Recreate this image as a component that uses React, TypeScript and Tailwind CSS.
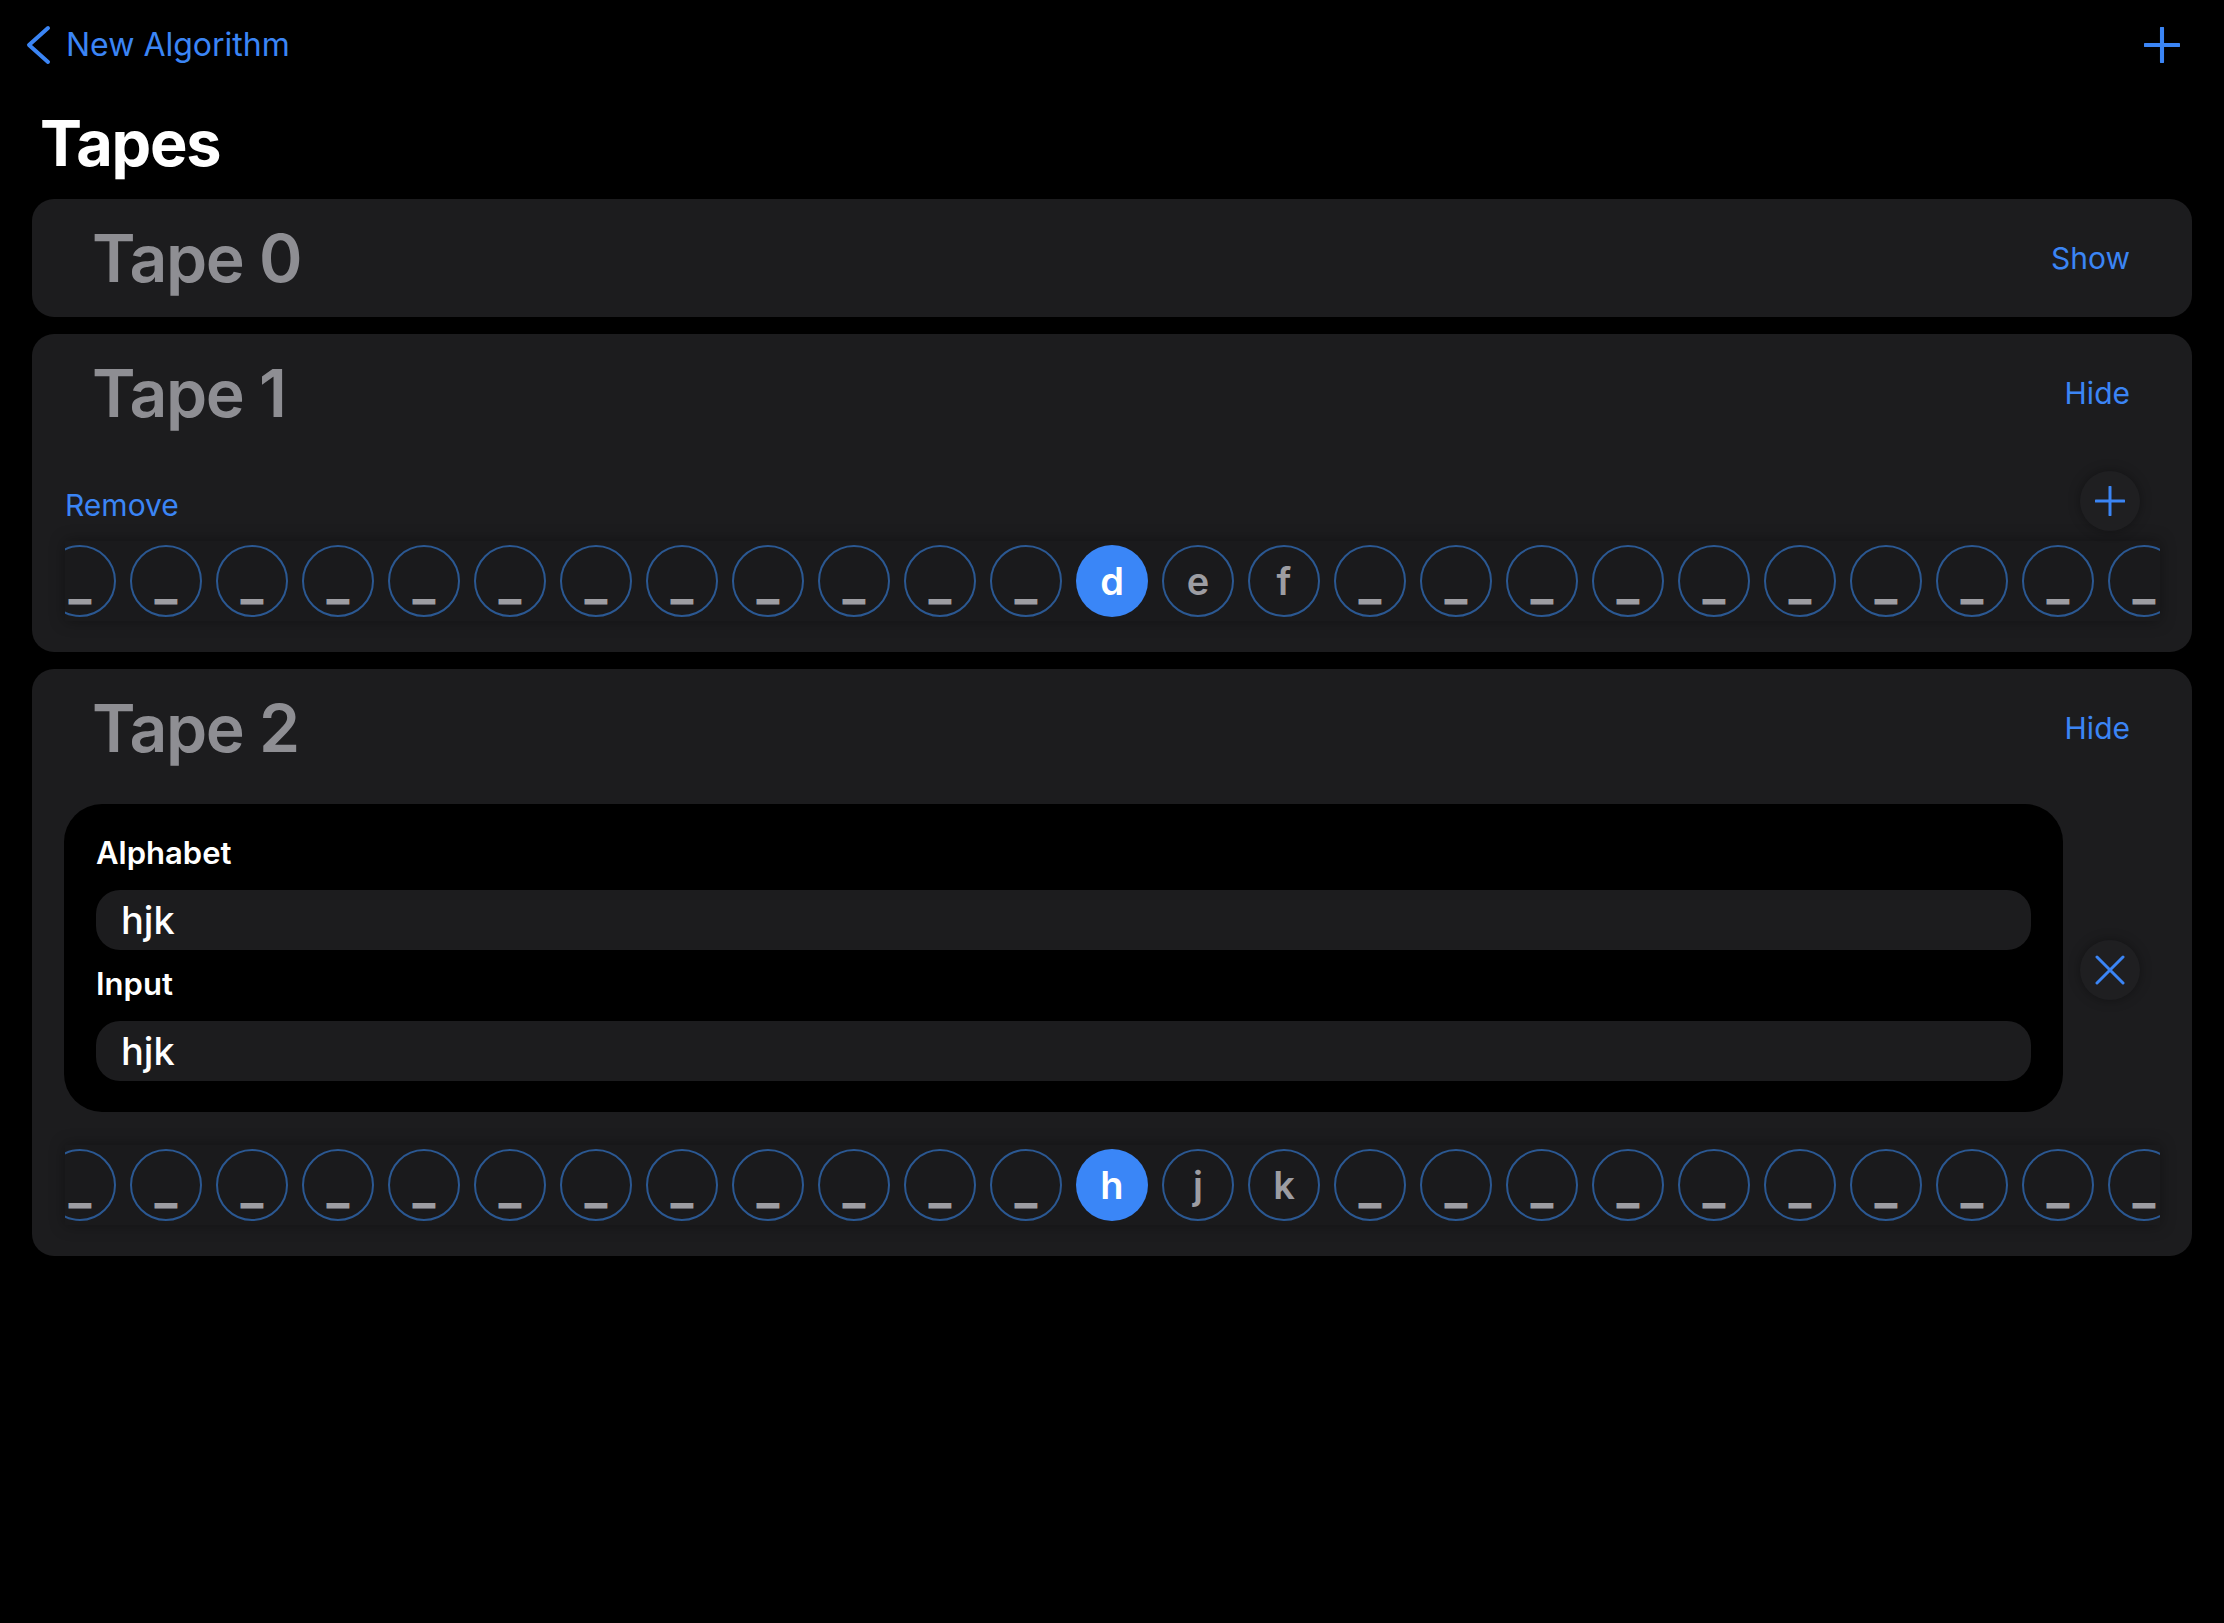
import React from "react";

const BLUE = "#3b85f5";

function blanks(n: number) {
  return Array.from({ length: n }, () => "_");
}

const tapes = [
  { name: "Tape 0", open: false },
  {
    name: "Tape 1",
    open: true,
    cells: [...blanks(12), "d", "e", "f", ...blanks(10)],
    head: 12,
  },
  {
    name: "Tape 2",
    open: true,
    editing: true,
    alphabet: "hjk",
    input: "hjk",
    cells: [...blanks(12), "h", "j", "k", ...blanks(10)],
    head: 12,
  },
];

function Cell({ ch, head }: { ch: string; head: boolean }) {
  const blank = ch === "_";
  return (
    <div
      className={`w-[72px] h-[72px] shrink-0 rounded-full flex items-center justify-center leading-none ${
        head
          ? "bg-[#3a86f7] text-white"
          : "border-2 border-[#2b5892] text-[#9d9da2]"
      } ${blank ? "text-[48px] font-bold" : "text-[38px] font-semibold"}`}
    >
      <span className={blank ? "translate-y-[1px]" : ""}>{ch}</span>
    </div>
  );
}

function Strip({ cells, head }: { cells: string[]; head: number }) {
  return (
    <div className="ml-[33px] mr-[32px] h-[80px] overflow-hidden bg-[#1a1a1c] shadow-[0_0_14px_rgba(0,0,0,0.35)]">
      <div className="flex items-center h-full gap-[14px] -ml-[21px]">
        {cells.map((c, i) => (
          <Cell key={i} ch={c} head={i === head} />
        ))}
      </div>
    </div>
  );
}

function RoundButton({ children }: { children: React.ReactNode }) {
  return (
    <div className="w-[60px] h-[60px] shrink-0 rounded-full bg-[#1f1f21] shadow-[0_0_12px_rgba(0,0,0,0.35)] flex items-center justify-center">
      {children}
    </div>
  );
}

function PlusIcon({ size, stroke }: { size: number; stroke: number }) {
  return (
    <svg width={size} height={size} viewBox="0 0 30 30" fill="none">
      <path
        d="M15 1v28M1 15h28"
        stroke={BLUE}
        strokeWidth={stroke}
        strokeLinecap="round"
      />
    </svg>
  );
}

function Field({ label, value }: { label: string; value: string }) {
  return (
    <div>
      <div className="text-[31px] leading-[36px] font-semibold text-white">
        {label}
      </div>
      <div className="mt-[19px] h-[60px] rounded-[24px] bg-[#1c1c1e] pl-[25px] flex items-center text-[38px] font-medium text-white">
        {value}
      </div>
    </div>
  );
}

export default function App() {
  return (
    <div className="min-h-screen bg-black font-[Inter,sans-serif] pb-10">
      <nav className="h-[90px] flex items-center justify-between pl-[24px] pr-[44px]">
        <div className="flex items-center gap-[14px]">
          <svg width="28" height="42" viewBox="0 0 28 42" fill="none">
            <path
              d="M24 4L5 21l19 17"
              stroke={BLUE}
              strokeWidth="4"
              strokeLinecap="round"
              strokeLinejoin="round"
            />
          </svg>
          <span className="text-[32px] text-[#3b85f5]">New Algorithm</span>
        </div>
        <PlusIcon size={36} stroke={3.4} />
      </nav>

      <h1 className="mt-[22px] pl-[40px] text-[63px] leading-none font-bold tracking-[-0.02em] text-white">
        Tapes
      </h1>

      <div className="mt-[24px] mx-[32px] flex flex-col gap-[17px]">
        {tapes.map((t) => (
          <div
            key={t.name}
            className="rounded-[22px] bg-[#1c1c1e] pt-[19px] pb-[19px]"
          >
            <div className="h-[80px] pl-[60px] pr-[62px] flex items-center justify-between">
              <span className="text-[66px] leading-none font-semibold tracking-[-0.02em] text-[#8e8e93]">
                {t.name}
              </span>
              <span className="text-[30px] text-[#3b85f5]">
                {t.open ? "Hide" : "Show"}
              </span>
            </div>

            {t.open && !t.editing && (
              <>
                <div className="mt-[38px] pl-[33px] pr-[52px] flex items-center justify-between">
                  <span className="text-[30px] text-[#3b85f5] translate-y-[4px]">
                    Remove
                  </span>
                  <RoundButton>
                    <PlusIcon size={30} stroke={3} />
                  </RoundButton>
                </div>
                <div className="mt-[10px] mb-[12px]">
                  <Strip cells={t.cells!} head={t.head!} />
                </div>
              </>
            )}

            {t.open && t.editing && (
              <>
                <div className="mt-[36px] pl-[32px] pr-[52px] flex items-center gap-[17px]">
                  <div className="flex-1 rounded-[38px] bg-black px-[32px] pt-[31px] pb-[31px] flex flex-col gap-[16px]">
                    <Field label="Alphabet" value={t.alphabet!} />
                    <Field label="Input" value={t.input!} />
                  </div>
                  <div className="mt-[23px]">
                    <RoundButton>
                      <svg width="30" height="30" viewBox="0 0 30 30" fill="none">
                        <path
                          d="M2 2l26 26M28 2L2 28"
                          stroke={BLUE}
                          strokeWidth="3"
                          strokeLinecap="round"
                        />
                      </svg>
                    </RoundButton>
                  </div>
                </div>
                <div className="mt-[33px] mb-[12px]">
                  <Strip cells={t.cells!} head={t.head!} />
                </div>
              </>
            )}
          </div>
        ))}
      </div>
    </div>
  );
}
